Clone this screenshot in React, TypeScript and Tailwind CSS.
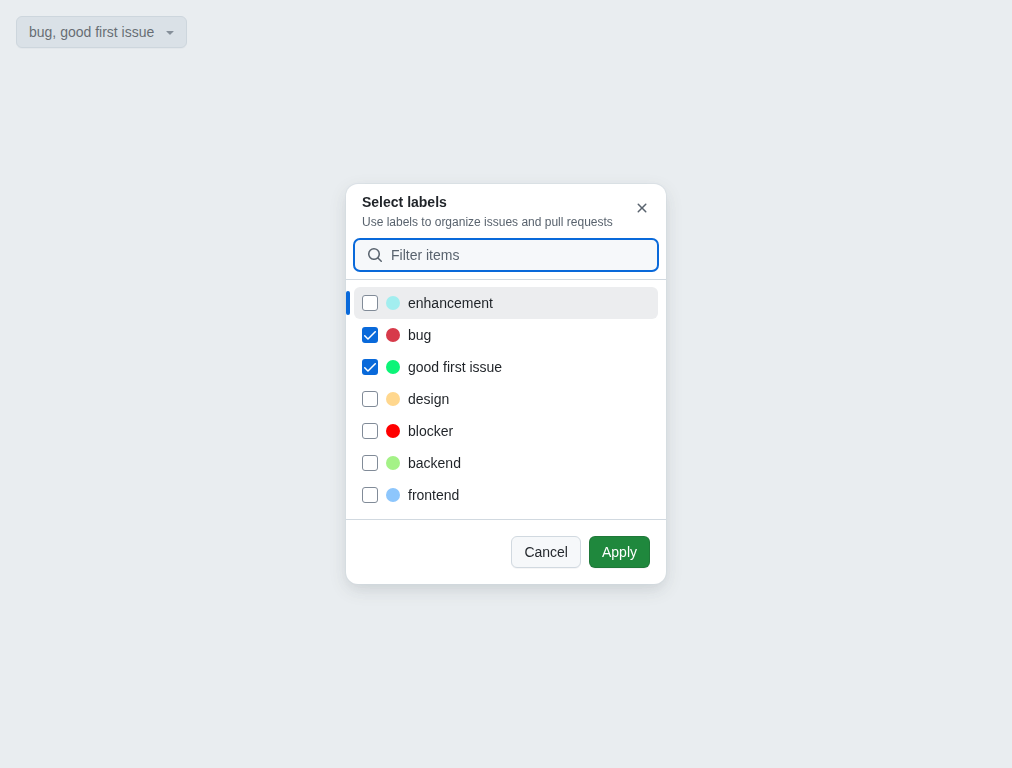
import React from "react";

type Label = { name: string; dot: string; checked?: boolean; active?: boolean };

const labels: Label[] = [
  { name: "enhancement", dot: "bg-[#a2eeef]", active: true },
  { name: "bug", dot: "bg-[#d73a4a]", checked: true },
  { name: "good first issue", dot: "bg-[#0cf478]", checked: true },
  { name: "design", dot: "bg-[#ffd78e]" },
  { name: "blocker", dot: "bg-[#ff0000]" },
  { name: "backend", dot: "bg-[#a4f287]" },
  { name: "frontend", dot: "bg-[#8dc6fc]" },
];

function Icon({ d, className }: { d: string; className?: string }) {
  return (
    <svg viewBox="0 0 16 16" width={16} height={16} fill="currentColor" className={className} aria-hidden="true">
      <path d={d} />
    </svg>
  );
}

const triangleDown =
  "m4.427 7.427 3.396 3.396a.25.25 0 0 0 .354 0l3.396-3.396A.25.25 0 0 0 11.396 7H4.604a.25.25 0 0 0-.177.427Z";
const search =
  "M10.68 11.74a6 6 0 0 1-7.922-8.982 6 6 0 0 1 8.982 7.922l3.04 3.04a.749.749 0 0 1-.326 1.275.749.749 0 0 1-.734-.215ZM11.5 7a4.499 4.499 0 1 0-8.997 0A4.499 4.499 0 0 0 11.5 7Z";
const cross =
  "M3.72 3.72a.75.75 0 0 1 1.06 0L8 6.94l3.22-3.22a.749.749 0 0 1 1.275.326.749.749 0 0 1-.215.734L9.06 8l3.22 3.22a.749.749 0 0 1-.326 1.275.749.749 0 0 1-.734-.215L8 9.06l-3.22 3.22a.751.751 0 0 1-1.042-.018.751.751 0 0 1-.018-1.042L6.94 8 3.72 4.78a.75.75 0 0 1 0-1.06Z";
const check =
  "M11.78.22a.756.756 0 0 1 0 1.07L4.518 8.554a.756.756 0 0 1-1.069 0L.202 5.307a.756.756 0 0 1 1.069-1.069l2.713 2.712L10.711.22a.756.756 0 0 1 1.069 0Z";

function Checkbox({ checked }: { checked?: boolean }) {
  return checked ? (
    <span className="flex size-4 shrink-0 items-center justify-center rounded-[3px] bg-[#0969da] text-white">
      <svg viewBox="0 0 12 9" width={12} height={9} fill="currentColor" aria-hidden="true">
        <path d={check} />
      </svg>
    </span>
  ) : (
    <span className="size-4 shrink-0 rounded-[3px] border border-[#818b98] bg-white" />
  );
}

function Row({ label }: { label: Label }) {
  return (
    <li
      className={`relative flex h-8 items-center gap-2 rounded-md px-2 ${label.active ? "bg-[#ecedef]" : ""}`}
    >
      {label.active && <span className="absolute top-1 -left-2 h-6 w-1 rounded-md bg-[#0969da]" />}
      <Checkbox checked={label.checked} />
      <span className={`size-3.5 shrink-0 rounded-full ${label.dot}`} />
      <span>{label.name}</span>
    </li>
  );
}

export default function App() {
  return (
    <div className="h-screen overflow-hidden bg-white p-4 font-['Liberation_Sans',Arial,sans-serif] text-sm leading-5 text-[#1f2328]">
      <button className="flex h-8 items-center gap-2 rounded-md border border-[#d1d9e0] bg-[#e6ecf1] pr-2 pl-3 text-[#25292e] shadow-[0_1px_0_0_#1f23280a]">
        <span>bug, good first issue</span>
        <Icon d={triangleDown} className="text-[#59636e]" />
      </button>

      <div className="fixed inset-0 flex items-center justify-center bg-[#c8d1da]/40">
        <section
          role="dialog"
          aria-label="Select labels"
          className="flex h-[400px] w-80 flex-col overflow-hidden rounded-xl bg-white shadow-[0_0_0_1px_#d1d9e080,0_6px_12px_-3px_#25292e0a,0_6px_18px_0_#25292e1f]"
        >
          <header className="flex items-start justify-between pt-2 pr-2 pl-4">
            <div>
              <h1 className="font-semibold">Select labels</h1>
              <p className="mt-0.5 text-xs leading-4 text-[#59636e]">Use labels to organize issues and pull requests</p>
            </div>
            <button aria-label="Close" className="flex size-8 items-center justify-center text-[#59636e]">
              <Icon d={cross} />
            </button>
          </header>

          <div className="px-[7px] pt-2 pb-[7px]">
            <div className="flex h-[34px] items-center gap-2 rounded-[7px] border-2 border-[#0969da] bg-[#f6f8fa] px-3 text-[#59636e]">
              <Icon d={search} />
              <span>Filter items</span>
            </div>
          </div>

          <ul className="grow border-t border-[#d1d9e0] px-2 pt-[7px]">
            {labels.map((label) => (
              <Row key={label.name} label={label} />
            ))}
          </ul>

          <footer className="flex h-[65px] shrink-0 items-center justify-end gap-2 border-t border-[#d1d9e0] px-4">
            <button className="h-8 rounded-md border border-[#d1d9e0] bg-[#f6f8fa] px-3 text-[#25292e] shadow-[0_1px_0_0_#1f23280a]">
              Cancel
            </button>
            <button className="h-8 rounded-md border border-[#1f232826] bg-[#1f883d] px-3 text-white shadow-[0_1px_0_0_#1f23280a]">
              Apply
            </button>
          </footer>
        </section>
      </div>
    </div>
  );
}
